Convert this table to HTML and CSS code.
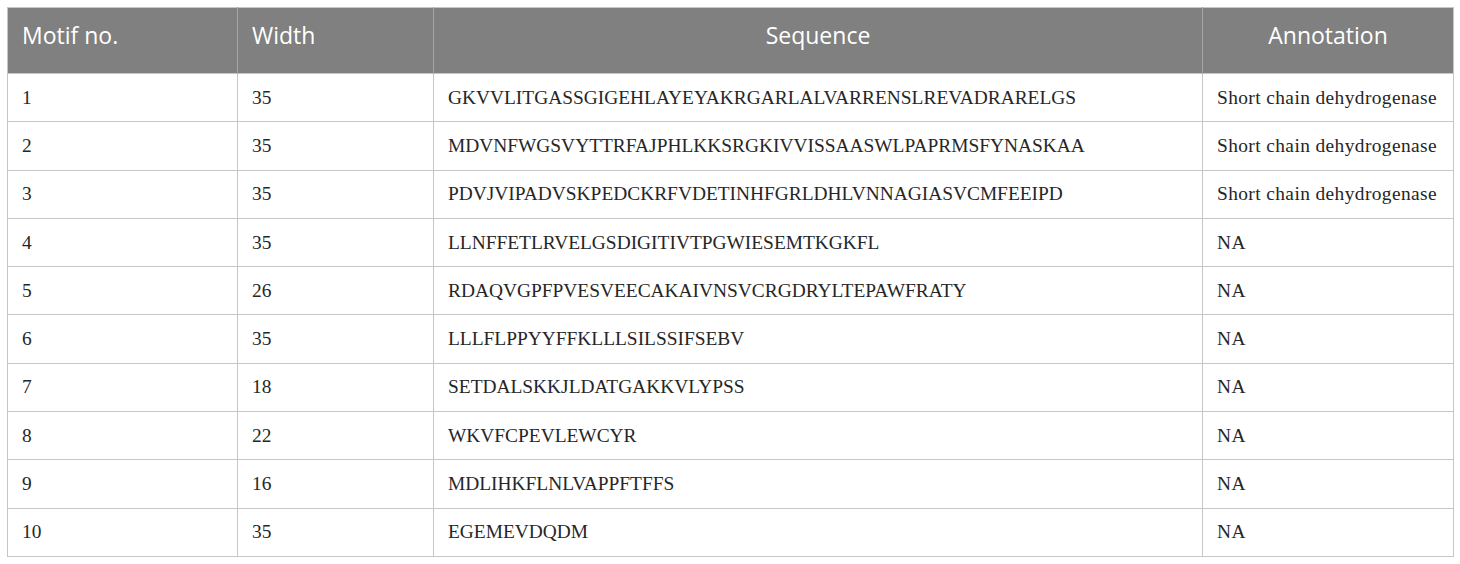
FILE: index.html
```html
<!DOCTYPE html>
<html>
<head>
<meta charset="utf-8">
<link rel="stylesheet" href="styles.css">
</head>
<body>
<table class="motifs">
  <colgroup>
    <col class="c1"><col class="c2"><col class="c3"><col class="c4">
  </colgroup>
  <thead>
    <tr>
      <th class="left">Motif no.</th>
      <th class="left">Width</th>
      <th>Sequence</th>
      <th>Annotation</th>
    </tr>
  </thead>
  <tbody>
    <tr><td>1</td><td>35</td><td>GKVVLITGASSGIGEHLAYEYAKRGARLALVARRENSLREVADRARELGS</td><td class="ann">Short chain dehydrogenase</td></tr>
    <tr><td>2</td><td>35</td><td>MDVNFWGSVYTTRFAJPHLKKSRGKIVVISSAASWLPAPRMSFYNASKAA</td><td class="ann">Short chain dehydrogenase</td></tr>
    <tr><td>3</td><td>35</td><td>PDVJVIPADVSKPEDCKRFVDETINHFGRLDHLVNNAGIASVCMFEEIPD</td><td class="ann">Short chain dehydrogenase</td></tr>
    <tr><td>4</td><td>35</td><td>LLNFFETLRVELGSDIGITIVTPGWIESEMTKGKFL</td><td class="ann">NA</td></tr>
    <tr><td>5</td><td>26</td><td>RDAQVGPFPVESVEECAKAIVNSVCRGDRYLTEPAWFRATY</td><td class="ann">NA</td></tr>
    <tr><td>6</td><td>35</td><td>LLLFLPPYYFFKLLLSILSSIFSEBV</td><td class="ann">NA</td></tr>
    <tr><td>7</td><td>18</td><td>SETDALSKKJLDATGAKKVLYPSS</td><td class="ann">NA</td></tr>
    <tr><td>8</td><td>22</td><td>WKVFCPEVLEWCYR</td><td class="ann">NA</td></tr>
    <tr><td>9</td><td>16</td><td>MDLIHKFLNLVAPPFTFFS</td><td class="ann">NA</td></tr>
    <tr><td>10</td><td>35</td><td>EGEMEVDQDM</td><td class="ann">NA</td></tr>
  </tbody>
</table>
</body>
</html>
```
FILE: styles.css
```css
html, body {
  margin: 0;
  padding: 0;
  background: #ffffff;
}
body {
  padding: 7px 7px 0 7px;
}
.motifs {
  border-collapse: collapse;
  table-layout: fixed;
  width: 1446px;
  border: 1px solid #c6c6c6;
}
.c1 { width: 230px; }
.c2 { width: 196px; }
.c3 { width: 769px; }
.c4 { width: 251px; }
.motifs th {
  background: #808080;
  color: #ffffff;
  font-family: "Open Sans", "Noto Sans", sans-serif;
  font-weight: 400;
  font-size: 23px;
  height: 66px;
  padding: 0 14px 11px 14px;
  text-align: center;
  border-left: 1px solid #a6a6a6;
  box-sizing: border-box;
}
.motifs th.left { text-align: left; }
.motifs th:first-child { border-left: none; }
.motifs td {
  font-family: "Liberation Serif", "Times New Roman", serif;
  font-size: 19.4px;
  color: #262626;
  height: 48.3px;
  padding: 0 14px;
  border: 1px solid #c6c6c6;
  box-sizing: border-box;
  white-space: nowrap;
}
.motifs td.ann {
  letter-spacing: 0.4px;
}
```
